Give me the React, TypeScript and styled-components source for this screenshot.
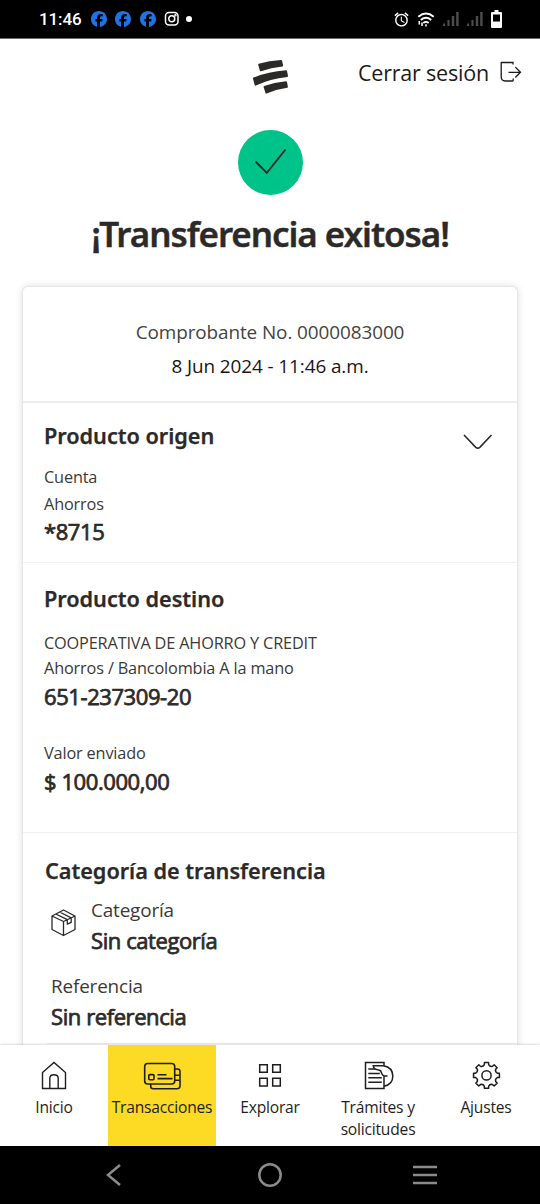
import React from "react";
import styled, { createGlobalStyle } from "styled-components";
import { FaFacebook } from "react-icons/fa6";
import { MdAlarm } from "react-icons/md";

const GlobalStyle = createGlobalStyle`
  * { box-sizing: border-box; }
  body {
    margin: 0;
    background: #fff;
    font-family: "Open Sans", "Noto Sans", sans-serif;
    color: #2c2a29;
  }
`;

const Screen = styled.div`
  display: flex;
  flex-direction: column;
  width: 540px;
  height: 1204px;
  overflow: hidden;
  background: #fff;
`;

const StatusBar = styled.header`
  display: flex;
  align-items: center;
  justify-content: space-between;
  height: 39px;
  flex: none;
  padding: 0 38px 0 39px;
  background: #000;
  border-bottom: 1px solid #6b6b6b;
  color: #fff;
`;

const StatusGroup = styled.div<{ $gap: number }>`
  display: flex;
  align-items: center;
  gap: ${(p) => p.$gap}px;
`;

const Clock = styled.span`
  width: 43.5px;
  font: 500 17px/20px Roboto, sans-serif;
  letter-spacing: -0.1px;
  white-space: nowrap;
`;

const FacebookMark = styled(FaFacebook)`
  display: block;
  width: 16px;
  height: 16px;
  color: #1f74e4;
`;

const Dot = styled.i`
  width: 6px;
  height: 6px;
  margin-left: -2px;
  border-radius: 50%;
  background: #fff;
`;

const Icon = styled.svg`
  display: block;
  flex: none;
  fill: none;
  stroke: currentColor;
  overflow: visible;
`;

const Content = styled.main`
  flex: 1;
  min-height: 0;
  overflow: hidden;
`;

const TopBar = styled.div`
  display: grid;
  grid-template-columns: 1fr 36px 1fr;
  height: 71px;
  padding: 21px 18px 0 18px;
`;

const Logout = styled.button`
  display: flex;
  justify-content: flex-end;
  align-items: flex-start;
  gap: 11px;
  margin-top: -1px;
  padding: 0;
  border: 0;
  background: none;
  color: #1c1b1a;
  font: 400 21.5px/28px "Open Sans", sans-serif;
  letter-spacing: -0.2px;
  white-space: nowrap;
`;

const Hero = styled.section`
  display: flex;
  flex-direction: column;
  align-items: center;
  padding-top: 20px;
`;

const SuccessBadge = styled.div`
  display: grid;
  place-items: center;
  width: 65px;
  height: 65px;
  border-radius: 50%;
  background: #00c389;
`;

const PageTitle = styled.h1`
  margin: 15px 0 0;
  font: 600 35px/48px "Noto Sans", sans-serif;
  letter-spacing: -1.07px;
  -webkit-text-stroke: 0.4px currentColor;
  white-space: nowrap;
`;

const Card = styled.article`
  margin: 28px 22px 0;
  border: 1px solid #e6e6e6;
  border-bottom: 0;
  border-radius: 6px 6px 0 0;
  background: #fff;
  box-shadow: 0 0 7px rgba(0, 0, 0, 0.13);
`;

const Section = styled.section<{ $pad: string; $line?: string }>`
  padding: ${(p) => p.$pad};
  border-bottom: ${(p) => p.$line ?? "1px solid #efefef"};
`;

const SectionHead = styled.div`
  display: flex;
  justify-content: space-between;
`;

const SectionTitle = styled.h2`
  margin: 0;
  font: 600 21.7px/30px "Noto Sans", sans-serif;
  letter-spacing: -0.04px;
  -webkit-text-stroke: 0.25px currentColor;
  white-space: nowrap;
`;

const Receipt = styled.p<{ $color: string }>`
  margin: 0;
  text-align: center;
  font-size: 18.9px;
  line-height: 34px;
  letter-spacing: -0.08px;
  color: ${(p) => p.$color};
`;

const Label = styled.p<{ $top?: number; $line?: number; $size?: number }>`
  margin: ${(p) => p.$top ?? 0}px 0 0;
  font-size: ${(p) => p.$size ?? 16.3}px;
  line-height: ${(p) => p.$line ?? 25}px;
  letter-spacing: -0.16px;
  color: #3b3938;
  white-space: nowrap;
`;

const Value = styled.p<{ $top?: number; $line?: number }>`
  margin: ${(p) => p.$top ?? 0}px 0 0;
  font-size: 22px;
  line-height: ${(p) => p.$line ?? 30}px;
  letter-spacing: -0.42px;
  -webkit-text-stroke: 0.75px currentColor;
  white-space: nowrap;
`;

const CategoryRow = styled.div`
  display: flex;
  gap: 15px;
  margin: 9px 0 17px 6px;
`;

const Reference = styled.div`
  margin: 0 -22px 0 2px;
  padding: 0 0 12px 4px;
  border-bottom: 1px solid #f1f1f1;
`;

const TabBar = styled.nav`
  position: relative;
  display: grid;
  grid-template-columns: repeat(5, 1fr);
  flex: none;
  height: 101px;
  background: #fff;
  box-shadow: 0 -1px 2px rgba(0, 0, 0, 0.14);
`;

const Tab = styled.a<{ $active?: boolean }>`
  display: flex;
  flex-direction: column;
  align-items: center;
  gap: 6px;
  padding-top: 15px;
  background: ${(p) => (p.$active ? "#fdda24" : "transparent")};
  font-size: 15.6px;
  line-height: 22px;
  letter-spacing: -0.2px;
  text-align: center;
  color: #1f1e1d;
`;

const SystemBar = styled.footer`
  display: flex;
  align-items: center;
  flex: none;
  height: 58px;
  padding: 0 103px 0 106px;
  justify-content: space-between;
  background: #000;
  color: #8b8b8b;
`;

const Signal = () => (
  <Icon width="16" height="15" viewBox="0 0 16 15">
    <g fill="#4c4c4c" stroke="none">
      <rect x="0" y="11.5" width="2.2" height="2.5" />
      <rect x="4.4" y="8" width="2.2" height="6" />
      <rect x="8.8" y="4" width="2.4" height="10" />
      <rect x="13.2" y="0" width="2.4" height="14" />
    </g>
  </Icon>
);

const polar = (cx: number, cy: number, radius: number, degrees: number) => {
  const a = (degrees * Math.PI) / 180;
  return `${(cx + radius * Math.cos(a)).toFixed(2)} ${(cy + radius * Math.sin(a)).toFixed(2)}`;
};

// Eight teeth joined by rounded valleys.
const gearPath = (cx: number, cy: number) => {
  const at = (r: number, d: number) => polar(cx, cy, r, d);
  let d = `M${at(13, -9)}`;
  for (let k = 0; k < 8; k++) {
    const t = k * 45;
    d += `L${at(13.1, t + 9)}L${at(11, t + 11.5)}Q${at(9.1, t + 22.5)} ${at(11, t + 33.5)}L${at(13.1, t + 36)}`;
  }
  return d + "Z";
};

const tabs: { label: React.ReactNode; icon: React.ReactNode; active?: boolean }[] = [
  {
    label: "Inicio",
    icon: (
      <Icon width="38" height="30" viewBox="0 0 38 30" strokeWidth="1.4">
        <path d="M7.5 28.5V12.5L19 2.5l11.500 10v16zM14.800 28.500V18.500q0-3.700 4.200-3.700t4.200 3.700v10" />
      </Icon>
    ),
  },
  {
    label: "Transacciones",
    active: true,
    icon: (
      <Icon width="38" height="30" viewBox="0 0 38 30" strokeWidth="1.6">
        <rect x="1.700" y="3.500" width="30" height="20.500" rx="3" />
        <path d="M7.700 24v2.200q0 2.500 2.500 2.500H34q3 0 3-3V11.500q0-2.500-2.500-2.500h-2.500M32 15.300h5M32 20.300h5M14.500 14.800h9M14.500 18.600h15" />
        <rect x="5.800" y="14.600" width="5.200" height="5.200" rx="1" />
      </Icon>
    ),
  },
  {
    label: "Explorar",
    icon: (
      <Icon width="38" height="30" viewBox="0 0 38 30" strokeWidth="1.5">
        <path d="M8.700 4.700h7.600v7.600H8.700zM21.700 4.700h7.600v7.600H21.700zM8.700 18.300h7.600v7.600H8.700zM21.700 18.300h7.600v7.600H21.700z" />
      </Icon>
    ),
  },
  {
    label: (
      <>
        Trámites y<br />
        solicitudes
      </>
    ),
    icon: (
      <Icon width="38" height="30" viewBox="0 0 38 30" strokeWidth="1.5">
        <path d="M25 5.700V2.500H6.500v26H25V16.200M9.300 9h6.500M9.300 13.400h11.500M9.300 17.800h13.500M9.300 22.300h13.500" />
        <path d="M25 26.200q8.800-1.500 8.800-10.200T24.500 5.700H14.300q.2 3.300 3.200 3.700l4 1.300 1.500 3.300q.8 1.800 2.500 1.900l3 .1" />
      </Icon>
    ),
  },
  {
    label: "Ajustes",
    icon: (
      <Icon width="38" height="30" viewBox="0 0 38 30" strokeWidth="1.5" strokeLinejoin="round">
        <circle cx="19.500" cy="15.400" r="4.600" />
        <path d={gearPath(19.5, 15.4)} />
      </Icon>
    ),
  },
];

export default function App() {
  return (
    <Screen>
      <GlobalStyle />
      <StatusBar>
        <StatusGroup $gap={8.4}>
          <Clock>11:46</Clock>
          <FacebookMark />
          <FacebookMark />
          <FacebookMark />
          <Icon width="16" height="16" viewBox="0 0 16 16" strokeWidth="1.5">
            <rect x="1.500" y="1.500" width="12.500" height="12.500" rx="3.500" />
            <circle cx="7.750" cy="7.750" r="3" />
            <circle cx="11.400" cy="4.200" r=".5" />
          </Icon>
          <Dot />
        </StatusGroup>
        <StatusGroup $gap={8}>
          <MdAlarm size={17} />
          <Icon width="17" height="15" viewBox="0 0 17 15" strokeWidth="1.800">
            <path d="M.3 4.700q7.700-6.500 15.400 0M2.800 8q5.200-4.400 10.400 0M5.300 11q2.700-2.300 5.400 0" />
            <path d="M8 12.200v2.300M1.300 9v3.500M4 10.500v3.500" strokeWidth="1.500" />
          </Icon>
          <Signal />
          <Signal />
          <Icon width="11" height="18" viewBox="0 0 11 18">
            <path d="M3.500 0h4v2H10q1 0 1 1v14q0 1-1 1H1q-1 0-1-1V3q0-1 1-1h2.500zM2 4.500v7h7v-7z" fill="#fff" fillRule="evenodd" stroke="none" />
          </Icon>
        </StatusGroup>
      </StatusBar>

      <Content>
        <TopBar>
          <span />
          <Icon width="36" height="36" viewBox="0 0 36 36">
            <g fill="#2c2a29" stroke="none">
              <path d="M6.700 3.800Q17 .8 29.100 0q.8 0 1 .7l1 4.800q.1.900-.7 1Q19 7.700 9 11.200q-.9.200-1.200-.600L6.200 4.800q-.2-.8.500-1z" />
              <path d="M1.500 17.600Q16 11.400 34 10.200q.8 0 1 .7l1 5q.1.900-.7 1Q18 18.500 3.900 25.600q-.8.300-1.200-.5L1 18.700q-.2-.8.500-1.100z" />
              <path d="M12.200 26Q22 22.500 34 21.200q.8 0 1 .7l.9 4.900q.1.900-.7 1-11 1.500-20.600 5.700-.8.300-1.100-.5l-1.900-6q-.2-.7.600-1z" />
            </g>
          </Icon>
          <Logout>
            Cerrar sesión
            <Icon width="22" height="24" viewBox="0 0 22 24" strokeWidth="1.300">
              <path d="M13 5.500V3.500H1.200M1.200 3v14.500q0 4.500 4 4.500h7.300q.7 0 .7-.7V19.500M8.500 13.300H20.500M15.300 8.100l5.200 5.200-5.200 5.200" />
            </Icon>
          </Logout>
        </TopBar>

        <Hero>
          <SuccessBadge>
            <Icon width="32" height="26" viewBox="0 0 32 26" strokeWidth="1.800">
              <path d="M1.500 11.500l11.300 11.300L31.500-.5" />
            </Icon>
          </SuccessBadge>
          <PageTitle>¡Transferencia exitosa!</PageTitle>
        </Hero>

        <Card>
          <Section $pad="28px 20px 18px" $line="2px solid #ececec">
            <Receipt $color="#454342">Comprobante No. 0000083000</Receipt>
            <Receipt $color="#171615">8 Jun 2024 - 11:46 a.m.</Receipt>
          </Section>

          <Section $pad="18px 25px 17px 21px">
            <SectionHead>
              <SectionTitle>Producto origen</SectionTitle>
              <Icon width="30" height="30" viewBox="0 0 30 30" strokeWidth="1.600">
                <path d="M2 14l11.800 12.300q2 1.600 4 0L29.500 14" />
              </Icon>
            </SectionHead>
            <Label $top={12} $line={28}>Cuenta</Label>
            <Label $line={27}>Ahorros</Label>
            <Value $line={27}>*8715</Value>
          </Section>

          <Section $pad="21px 21px 36px">
            <SectionTitle>Producto destino</SectionTitle>
            <Label $top={17}>COOPERATIVA DE AHORRO Y CREDIT</Label>
            <Label>Ahorros / Bancolombia A la mano</Label>
            <Value>651-237309-20</Value>
            <Label $top={30}>Valor enviado</Label>
            <Value>$ 100.000,00</Value>
          </Section>

          <Section $pad="23px 22px 16px">
            <SectionTitle>Categoría de transferencia</SectionTitle>
            <CategoryRow>
              <Icon width="25" height="44" viewBox="0 0 25 44" strokeWidth="1.300" strokeLinejoin="round">
                <path d="M12.500 15L24 21v13.500l-11.500 6L1 34.500V21zM1 21l11.500 5.500L24 21M12.500 26.500v14M4.800 19l11.500 5.700M8.600 17l11.600 5.800M16.300 24.700v4.500l3.900-1.800v-4.600" />
              </Icon>
              <div>
                <Label $size={18.9} $line={30}>Categoría</Label>
                <Value>Sin categoría</Value>
              </div>
            </CategoryRow>
            <Reference>
              <Label $size={18.9} $line={29}>Referencia</Label>
              <Value>Sin referencia</Value>
            </Reference>
          </Section>
        </Card>
      </Content>

      <TabBar>
        {tabs.map((tab, i) => (
          <Tab key={i} $active={tab.active}>
            {tab.icon}
            <span>{tab.label}</span>
          </Tab>
        ))}
      </TabBar>

      <SystemBar>
        <Icon width="21" height="22" viewBox="0 0 21 22" strokeWidth="2.500">
          <path d="M14 1L2 11l12 10" />
        </Icon>
        <Icon width="24" height="24" viewBox="0 0 24 24" strokeWidth="2.500">
          <circle cx="12" cy="12" r="10.700" />
        </Icon>
        <Icon width="24" height="20" viewBox="0 0 24 20" strokeWidth="2.600">
          <path d="M0 2h24M0 10h24M0 18h24" />
        </Icon>
      </SystemBar>
    </Screen>
  );
}
